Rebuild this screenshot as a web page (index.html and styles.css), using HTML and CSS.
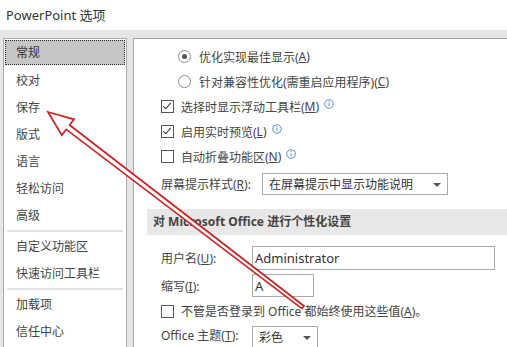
FILE: index.html
```html
<!DOCTYPE html>
<html lang="zh-CN">
<head>
    <meta charset="UTF-8">
    <title>PowerPoint 选项</title>
    <link rel="stylesheet" href="styles.css">
</head>
<body>
    <div class="titlebar">PowerPoint 选项</div>

    <div class="main">
        <ul class="nav">
            <li class="selected">常规</li>
            <li>校对</li>
            <li>保存</li>
            <li>版式</li>
            <li>语言</li>
            <li>轻松访问</li>
            <li>高级</li>
            <li class="sep"></li>
            <li>自定义功能区</li>
            <li>快速访问工具栏</li>
            <li class="sep"></li>
            <li>加载项</li>
            <li>信任中心</li>
        </ul>

        <div class="panel">
            <div class="scroll">
                <div class="row heading">使用多个显示器时:</div>
                <div class="row radio-row">
                    <span class="radio on"></span>优化实现最佳显示(<u>A</u>)
                </div>
                <div class="row radio-row">
                    <span class="radio"></span>针对兼容性优化(需重启应用程序)(<u>C</u>)
                </div>
                <div class="row check-row">
                    <span class="check on"></span>选择时显示浮动工具栏(<u>M</u>)
                    <svg class="info" viewBox="0 0 10 10"><circle cx="5" cy="5" r="4.3"/><line x1="5" y1="4.2" x2="5" y2="7.4"/><circle class="dot" cx="5" cy="2.7" r="0.6"/></svg>
                </div>
                <div class="row check-row">
                    <span class="check on"></span>启用实时预览(<u>L</u>)
                    <svg class="info" viewBox="0 0 10 10"><circle cx="5" cy="5" r="4.3"/><line x1="5" y1="4.2" x2="5" y2="7.4"/><circle class="dot" cx="5" cy="2.7" r="0.6"/></svg>
                </div>
                <div class="row check-row">
                    <span class="check"></span>自动折叠功能区(<u>N</u>)
                    <svg class="info" viewBox="0 0 10 10"><circle cx="5" cy="5" r="4.3"/><line x1="5" y1="4.2" x2="5" y2="7.4"/><circle class="dot" cx="5" cy="2.7" r="0.6"/></svg>
                </div>
                <div class="row field-row tip-row">
                    <span class="label tip-label">屏幕提示样式(<u>R</u>):</span>
                    <div class="select tip-select">在屏幕提示中显示功能说明<span class="caret"></span></div>
                </div>

                <div class="band">对 Microsoft Office 进行个性化设置</div>

                <div class="row field-row user-row">
                    <span class="label">用户名(<u>U</u>):</span>
                    <div class="input user-input">Administrator</div>
                </div>
                <div class="row field-row initials-row">
                    <span class="label">缩写(<u>I</u>):</span>
                    <div class="input initials-input">A</div>
                </div>
                <div class="row check-row always-row">
                    <span class="check"></span>不管是否登录到 Office 都始终使用这些值(<u>A</u>)。
                </div>
                <div class="row field-row theme-row">
                    <span class="label">Office 主题(<u>T</u>):</span>
                    <div class="select theme-select">彩色<span class="caret"></span></div>
                </div>
            </div>
        </div>
    </div>

    <svg class="arrow" width="507" height="347" viewBox="0 0 507 347">
        <polygon points="48,112 74,119.3 69.6,125 304,306 302,308.6 66.2,129.4 61.8,135.1"/>
    </svg>
</body>
</html>
```

FILE: styles.css
```css
body {
    margin: 0;
    width: 507px;
    height: 347px;
    overflow: hidden;
    position: relative;
    background: #fff;
    color: #444;
    font-family: "Noto Sans", "Noto Sans CJK SC", sans-serif;
    font-size: 12px;
}
.titlebar {
    height: 30px;
    line-height: 30px;
    padding-left: 6px;
    font-size: 13px;
    color: #333;
}
.main {
    display: flex;
    gap: 6px;
    height: 317px;
    padding: 8px 0 0 3px;
    background: #e6e6e6;
    box-sizing: border-box;
}
.nav {
    list-style: none;
    margin: 0;
    padding: 0;
    width: 122px;
    flex: none;
    background: #fff;
    border: 1px solid #ababab;
    border-bottom: none;
}
.nav li {
    height: 27px;
    line-height: 27px;
    padding-left: 12px;
}
.nav li.selected {
    margin: 1px 1px 2px;
    padding-left: 10px;
    background: #c6c6c6;
    border: 1px dotted #333;
    height: 23px;
    line-height: 23px;
    color: #333;
}
.nav li.sep {
    height: 0;
    margin: 1px 3px;
    border-top: 2px solid #e1e1e1;
    padding: 0;
}
.panel {
    flex: 1;
    background: #fff;
    border: 1px solid #ababab;
    border-top-color: #a0a0a0;
    border-right: none;
    border-bottom: none;
    overflow: hidden;
}
.scroll {
    margin-top: -20px;
    padding-left: 13px;
}
.row {
    display: flex;
    align-items: center;
    height: 25px;
    white-space: nowrap;
}
.heading {
    padding-left: 14px;
}
.radio-row {
    padding-left: 31px;
}
.radio {
    width: 11px;
    height: 11px;
    border: 1px solid #888;
    border-radius: 50%;
    margin-right: 8px;
    position: relative;
}
.radio.on::after {
    content: "";
    position: absolute;
    left: 3px;
    top: 3px;
    width: 5px;
    height: 5px;
    border-radius: 50%;
    background: #555;
}
.check-row {
    padding-left: 14px;
}
.check {
    width: 11px;
    height: 11px;
    border: 1px solid #555;
    margin-right: 7px;
    position: relative;
}
.check.on::after {
    content: "";
    position: absolute;
    left: 3px;
    top: 0;
    width: 3px;
    height: 7px;
    border: solid #333;
    border-width: 0 1.5px 1.5px 0;
    transform: rotate(40deg);
}
svg.info {
    width: 10px;
    height: 10px;
    margin-left: 5px;
    margin-top: -6px;
    fill: none;
    stroke: #4d85c4;
    stroke-width: 0.9;
}
svg.info .dot {
    fill: #4d85c4;
    stroke: none;
}
.field-row {
    padding-left: 14px;
}
.label {
    width: 91px;
    flex: none;
}
.tip-label {
    width: 101px;
}
.tip-row {
    height: 30px;
}
.select,
.input {
    position: relative;
    border: 1px solid #ababab;
    box-sizing: border-box;
    padding-left: 6px;
    display: flex;
    align-items: center;
    color: #333;
}
.tip-select {
    width: 186px;
    height: 22px;
}
.caret {
    position: absolute;
    right: 6px;
    top: 9px;
    border: 4px solid transparent;
    border-top: 4px solid #555;
    border-bottom: none;
}
.band {
    margin-top: 10px;
    height: 26px;
    line-height: 26px;
    padding-left: 6px;
    background: #e8e8e8;
    font-weight: bold;
    color: #444;
    white-space: nowrap;
}
.user-row {
    margin-top: 10px;
}
.user-input {
    width: 243px;
    height: 24px;
    font-size: 13px;
    padding-left: 2px;
}
.initials-row {
    margin-top: 4px;
    height: 23px;
}
.initials-input {
    width: 62px;
    height: 23px;
    font-size: 13px;
    padding-left: 2px;
}
.always-row {
    height: 28px;
}
.theme-row {
    height: 22px;
    align-items: flex-start;
}
.theme-row .label {
    line-height: 22px;
}
.theme-select {
    width: 66px;
    height: 22px;
    margin-top: 1px;
}
.arrow {
    position: absolute;
    left: 0;
    top: 0;
}
.arrow polygon {
    fill: rgba(255, 255, 255, 0.85);
    stroke: #c32a2a;
    stroke-width: 1.8;
    stroke-linejoin: miter;
}
```
